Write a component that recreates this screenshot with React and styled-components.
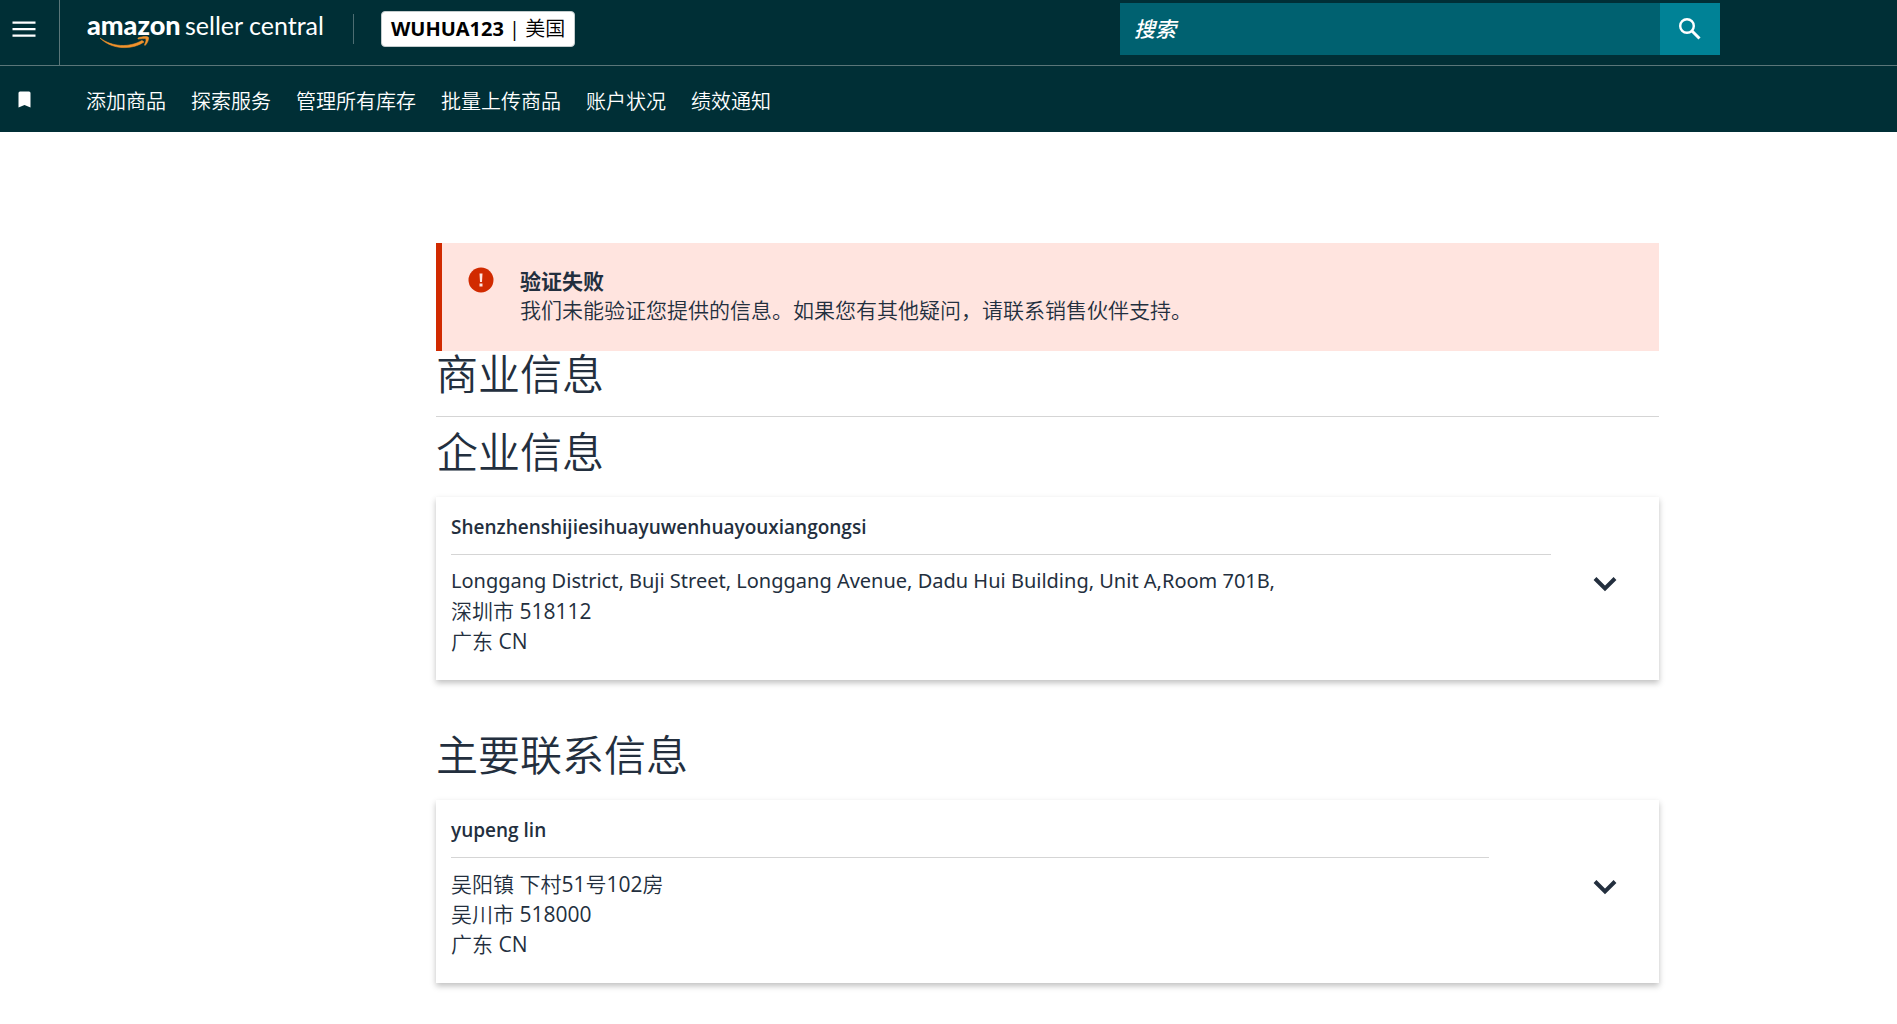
import React from "react";
import styled, { createGlobalStyle } from "styled-components";

const GlobalStyle = createGlobalStyle`
  * {
    box-sizing: border-box;
  }

  body {
    margin: 0;
    background: #ffffff;
    color: #232f3e;
    font-family: "Open Sans", "Noto Sans CJK SC DemiLight", "Noto Sans CJK SC", sans-serif;
    font-size: 21px;
    line-height: 30px;
  }

  a {
    color: inherit;
    text-decoration: none;
  }

  button {
    padding: 0;
    border: 0;
    background: none;
    color: inherit;
    font: inherit;
    cursor: pointer;
  }
`;

const Header = styled.header`
  background: #002f36;
  color: #ffffff;
`;

const TopBar = styled.div`
  display: flex;
  height: 66px;
  border-bottom: 1px solid #5a7679;
`;

const MenuButton = styled.button`
  display: flex;
  align-items: center;
  flex: none;
  width: 60px;
  padding: 0 0 8px 12px;
  border-right: 1px solid #5a7679;
`;

const Brand = styled.div`
  display: flex;
  flex: 1;
  align-items: center;
  padding: 0 0 7px 27px;
`;

const Logo = styled.a`
  display: block;
  padding-right: 25px;
  border-right: 1px solid #4d6d72;

  svg {
    display: block;
    margin: -10px 0;
  }
`;

const LogoText = styled.text`
  fill: #ffffff;
  font-family: Lato, sans-serif;
  font-size: ${props => (props.$bold ? "27px" : "25px")};
  font-weight: ${props => (props.$bold ? 900 : 400)};
`;

const Account = styled.button`
  height: 36px;
  margin-left: 27px;
  padding: 0 9px;
  border: 1px solid #c3cccd;
  border-radius: 4px;
  background: #ffffff;
  color: #000000;
  font-size: 20px;
  white-space: nowrap;

  b {
    font-family: "Noto Sans", sans-serif;
  }
`;

const SearchForm = styled.form`
  display: flex;
  flex: none;
  width: 600px;
  height: 52px;
  margin: 3px 177px 0 0;
`;

const SearchInput = styled.input`
  flex: 1;
  min-width: 0;
  padding: 0 14px 2px;
  border: 0;
  border-radius: 0;
  background: #006170;
  color: #ffffff;
  font: italic 500 21px "Noto Sans CJK SC", sans-serif;

  &::placeholder {
    color: #ffffff;
    opacity: 1;
  }
`;

const SearchButton = styled.button`
  display: flex;
  align-items: center;
  justify-content: center;
  width: 60px;
  background: #008296;
`;

const Bookmarks = styled.nav`
  display: flex;
  align-items: center;
  height: 66px;
  font-size: 20px;
`;

const BookmarkButton = styled.button`
  display: flex;
  flex: none;
  width: 86px;
  padding-left: 18px;
`;

const BookmarkList = styled.ul`
  display: flex;
  gap: 25px;
  margin: 0;
  padding: 6px 0 0;
  list-style: none;
`;

const Content = styled.main`
  padding: 111px 238px 0 436px;
`;

const Alert = styled.section`
  display: flex;
  gap: 26px;
  padding: 22px 26px 26px;
  border-left: 6px solid #d12a00;
  background: #ffe4df;

  svg {
    flex: none;
    margin-top: 2px;
  }
`;

const AlertTitle = styled.h4`
  margin: 0;
  font-family: "Noto Sans CJK SC", sans-serif;
  font-size: 21px;
  font-weight: 700;
`;

const AlertText = styled.p`
  margin: 0;
`;

const Title = styled.h1`
  margin: 0;
  padding-bottom: 19px;
  border-bottom: 1px solid #d5d5d5;
  font-size: 42px;
  font-weight: 400;
  line-height: 46px;
`;

const Section = styled.section`
  margin-bottom: 40px;
`;

const SectionTitle = styled.h2`
  margin: 0;
  padding: 12px 0 22px;
  font-size: 42px;
  font-weight: 400;
  line-height: 46px;
`;

const Card = styled.article`
  display: flex;
  align-items: center;
  padding: 15px 0 24px 15px;
  background: #ffffff;
  box-shadow: 0 3px 6px rgba(0, 0, 0, 0.25);
`;

const CardBody = styled.div`
  flex: 1;
`;

const CardName = styled.h3`
  margin: 0 ${props => props.$inset} 11px 0;
  padding-bottom: 12px;
  border-bottom: 1px solid #d5d5d5;
  font-size: 19px;
  font-weight: 600;
`;

const Address = styled.address`
  font-style: normal;
`;

const Street = styled.div`
  ${props =>
    props.$latin && 'font-family: "Noto Sans", sans-serif; font-size: 20px;'}
`;

const ExpandButton = styled.button`
  display: flex;
  flex: none;
  justify-content: center;
  width: 108px;
`;

const links = [
  "添加商品",
  "探索服务",
  "管理所有库存",
  "批量上传商品",
  "账户状况",
  "绩效通知"
];

const sections = [
  {
    title: "企业信息",
    name: "Shenzhenshijiesihuayuwenhuayouxiangongsi",
    inset: "0",
    street:
      "Longgang District, Buji Street, Longgang Avenue, Dadu Hui Building, Unit A,Room 701B,",
    latin: true,
    city: "深圳市 518112",
    region: "广东 CN"
  },
  {
    title: "主要联系信息",
    name: "yupeng lin",
    inset: "62px",
    street: "吴阳镇 下村51号102房",
    latin: false,
    city: "吴川市 518000",
    region: "广东 CN"
  }
];

const SellerLogo = () => (
  <svg width="241" height="50" viewBox="0 0 241 50">
    <LogoText x="0" y="31" $bold>
      amazon
    </LogoText>
    <LogoText x="98" y="31">
      seller central
    </LogoText>
    <path
      d="M13 34 C25 43 42 44 55 36.500 L57 38 C45 46 25 46 13 34 Z M51 34 C55 32.500 61 32 61.500 33.500 C62 35.500 60 40 58 41.500 L57.500 41 C58.500 38.500 59.500 36 59 35 C58 34.200 54 34.800 51 35 Z"
      fill="#f3932c"
      stroke="#f3932c"
      strokeWidth="0.600"
    />
  </svg>
);

const App = () => (
  <>
    <GlobalStyle />
    <Header>
      <TopBar>
        <MenuButton aria-label="菜单">
          <svg width="24" height="16" fill="#ffffff">
            <path d="M0.500 0.500h23v2.200h-23zM0.500 7h23v2.200h-23zM0.500 13.500h23v2.200h-23z" />
          </svg>
        </MenuButton>
        <Brand>
          <Logo href="#" aria-label="amazon seller central">
            <SellerLogo />
          </Logo>
          <Account>
            <b>WUHUA123</b> | 美国
          </Account>
        </Brand>
        <SearchForm>
          <SearchInput type="text" placeholder="搜索" aria-label="搜索" />
          <SearchButton type="button" aria-label="搜索">
            <svg
              width="24"
              height="24"
              fill="none"
              stroke="#ffffff"
              strokeWidth="2.400"
            >
              <circle cx="9" cy="9" r="6.800" />
              <path d="M14 14 L21.500 21.500" strokeWidth="3" />
            </svg>
          </SearchButton>
        </SearchForm>
      </TopBar>
      <Bookmarks>
        <BookmarkButton aria-label="书签">
          <svg width="13" height="17" fill="#ffffff">
            <path d="M2 0.500h9a1.500 1.500 0 0 1 1.500 1.500v14.500l-6-2.500-6 2.500V2A1.500 1.500 0 0 1 2 0.500z" />
          </svg>
        </BookmarkButton>
        <BookmarkList>
          {links.map(link => (
            <li key={link}>
              <a href="#">{link}</a>
            </li>
          ))}
        </BookmarkList>
      </Bookmarks>
    </Header>
    <Content>
      <Alert role="alert">
        <svg width="26" height="26">
          <circle cx="13" cy="13" r="12.500" fill="#d12a00" />
          <path
            d="M11.500 6.500h3l-0.500 8.500h-2zM11.500 16.500h3v3h-3z"
            fill="#ffe4df"
          />
        </svg>
        <div>
          <AlertTitle>验证失败</AlertTitle>
          <AlertText>
            我们未能验证您提供的信息。如果您有其他疑问，请联系销售伙伴支持。
          </AlertText>
        </div>
      </Alert>
      <Title>商业信息</Title>
      {sections.map(({ title, name, inset, street, latin, city, region }) => (
        <Section key={title}>
          <SectionTitle>{title}</SectionTitle>
          <Card>
            <CardBody>
              <CardName $inset={inset}>{name}</CardName>
              <Address>
                <Street $latin={latin}>{street}</Street>
                <div>{city}</div>
                <div>{region}</div>
              </Address>
            </CardBody>
            <ExpandButton aria-label={`展开${title}`}>
              <svg width="24" height="16" fill="none" stroke="#232f3e">
                <path
                  d="M2 2.500 L12 12.500 L22 2.500"
                  strokeWidth="4"
                />
              </svg>
            </ExpandButton>
          </Card>
        </Section>
      ))}
    </Content>
  </>
);

export default App;
